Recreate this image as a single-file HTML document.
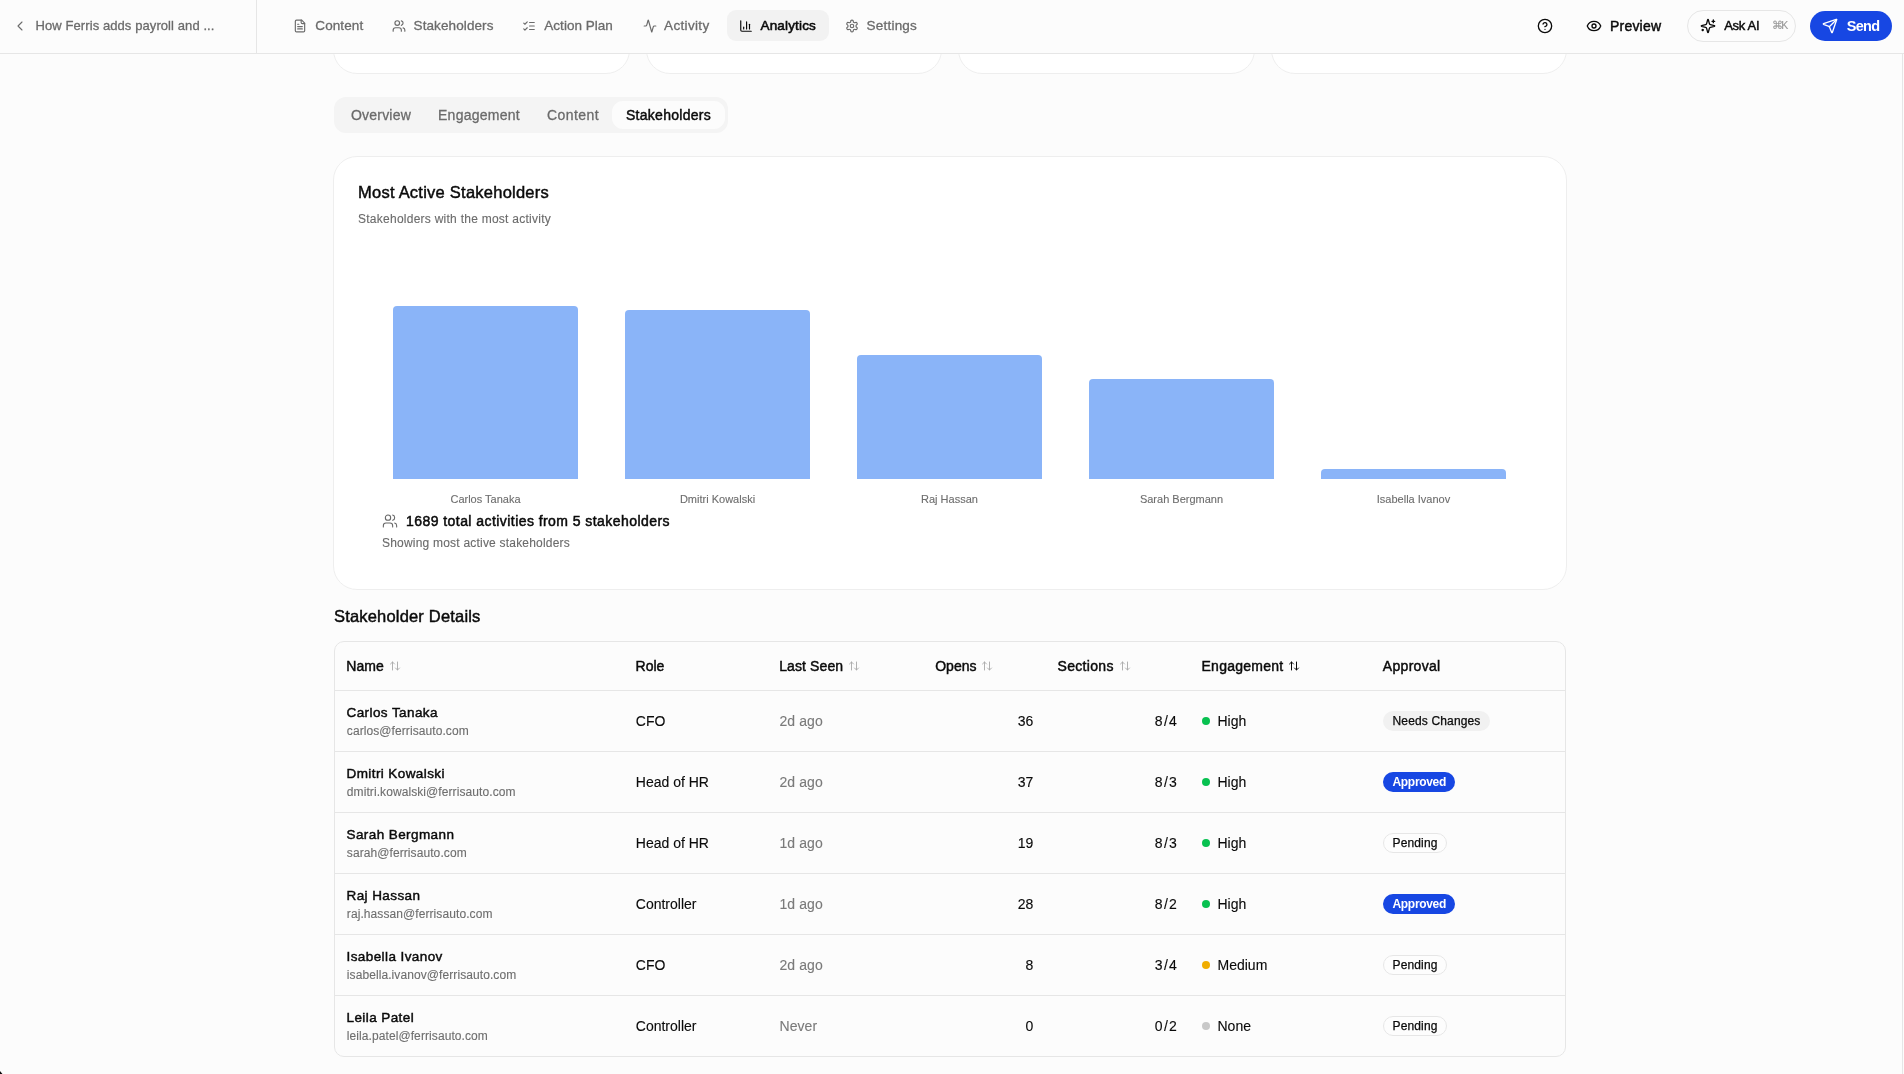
<!DOCTYPE html>
<html><head><meta charset="utf-8"><title>Analytics</title>
<style>
html,body{margin:0;padding:0}
body{width:1904px;height:1074px;overflow:hidden;position:relative;background:#fcfcfc;font-family:"Liberation Sans",sans-serif;-webkit-font-smoothing:antialiased}
#root{position:absolute;left:0;top:0;width:1904px;height:1074px;will-change:transform}
.t{position:absolute;white-space:nowrap}
.r{position:absolute}
.i{position:absolute;overflow:visible}
</style></head><body><div id="root">
<div class="r" style="left:333.0px;top:-40px;width:296.5px;height:114px;background:#fff;border:1px solid #eeeeee;border-radius:24px;box-sizing:border-box"></div>
<div class="r" style="left:645.5px;top:-40px;width:296.5px;height:114px;background:#fff;border:1px solid #eeeeee;border-radius:24px;box-sizing:border-box"></div>
<div class="r" style="left:958.0px;top:-40px;width:296.5px;height:114px;background:#fff;border:1px solid #eeeeee;border-radius:24px;box-sizing:border-box"></div>
<div class="r" style="left:1270.5px;top:-40px;width:296.5px;height:114px;background:#fff;border:1px solid #eeeeee;border-radius:24px;box-sizing:border-box"></div>
<div class="r" style="left:0px;top:0px;width:1904px;height:53px;background:#fcfcfc"></div>
<div class="r" style="left:0px;top:53px;width:1904px;height:1px;background:#e6e6e6"></div>
<div class="r" style="left:256px;top:0px;width:1px;height:53px;background:#e6e6e6"></div>
<div class="r" style="left:1902px;top:54px;width:1px;height:1020px;background:#e6e6e6"></div>
<svg class="i" style="left:12px;top:18px;" width="16" height="16" viewBox="0 0 24 24" fill="none" stroke="#6b6b6b" stroke-width="1.6" stroke-linecap="round" stroke-linejoin="round"><path d="m15 18-6-6 6-6"/></svg>
<div class="t" style="left:35.50px;top:18.99px;font-size:13px;line-height:13px;color:#6b6b6b;letter-spacing:0.088px;-webkit-text-stroke:0.3px #6b6b6b;">How Ferris adds payroll and ...</div>
<div class="r" style="left:727px;top:10px;width:102px;height:31px;background:#f2f2f2;border-radius:9px"></div>
<svg class="i" style="left:293px;top:19px;" width="14" height="14" viewBox="0 0 24 24" fill="none" stroke="#6b6b6b" stroke-width="2" stroke-linecap="round" stroke-linejoin="round"><path d="M15 2H6a2 2 0 0 0-2 2v16a2 2 0 0 0 2 2h12a2 2 0 0 0 2-2V7Z"/><path d="M14 2v4a2 2 0 0 0 2 2h4"/><path d="M10 9H8"/><path d="M16 13H8"/><path d="M16 17H8"/></svg>
<div class="t" style="left:315.30px;top:18.57px;font-size:13.5px;line-height:13.5px;color:#6b6b6b;letter-spacing:0.103px;-webkit-text-stroke:0.3px #6b6b6b;">Content</div>
<svg class="i" style="left:391.5px;top:19px;" width="14" height="14" viewBox="0 0 24 24" fill="none" stroke="#6b6b6b" stroke-width="2" stroke-linecap="round" stroke-linejoin="round"><path d="M16 21v-2a4 4 0 0 0-4-4H6a4 4 0 0 0-4 4v2"/><circle cx="9" cy="7" r="4"/><path d="M22 21v-2a4 4 0 0 0-3-3.87"/><path d="M16 3.13a4 4 0 0 1 0 7.75"/></svg>
<div class="t" style="left:413.55px;top:18.57px;font-size:13.5px;line-height:13.5px;color:#6b6b6b;letter-spacing:0.101px;-webkit-text-stroke:0.3px #6b6b6b;">Stakeholders</div>
<svg class="i" style="left:522px;top:19px;" width="14" height="14" viewBox="0 0 24 24" fill="none" stroke="#6b6b6b" stroke-width="2" stroke-linecap="round" stroke-linejoin="round"><path d="m3 17 2 2 4-4"/><path d="m3 7 2 2 4-4"/><path d="M13 6h8"/><path d="M13 12h8"/><path d="M13 18h8"/></svg>
<div class="t" style="left:544.30px;top:18.57px;font-size:13.5px;line-height:13.5px;color:#6b6b6b;letter-spacing:0.028px;-webkit-text-stroke:0.3px #6b6b6b;">Action Plan</div>
<svg class="i" style="left:642.5px;top:19px;" width="14" height="14" viewBox="0 0 24 24" fill="none" stroke="#6b6b6b" stroke-width="2" stroke-linecap="round" stroke-linejoin="round"><path d="M22 12h-2.48a2 2 0 0 0-1.93 1.46l-2.35 8.36a.25.25 0 0 1-.48 0L9.24 2.18a.25.25 0 0 0-.48 0l-2.35 8.36A2 2 0 0 1 4.49 12H2"/></svg>
<div class="t" style="left:664.05px;top:18.57px;font-size:13.5px;line-height:13.5px;color:#6b6b6b;letter-spacing:0.343px;-webkit-text-stroke:0.3px #6b6b6b;">Activity</div>
<svg class="i" style="left:739px;top:19px;" width="14" height="14" viewBox="0 0 24 24" fill="none" stroke="#0a0a0a" stroke-width="2" stroke-linecap="round" stroke-linejoin="round"><path d="M3 3v16a2 2 0 0 0 2 2h16"/><path d="M18 17V9"/><path d="M13 17V5"/><path d="M8 17v-3"/></svg>
<div class="t" style="left:760.50px;top:18.57px;font-size:13.5px;line-height:13.5px;color:#0a0a0a;letter-spacing:0.165px;-webkit-text-stroke:0.55px #0a0a0a;">Analytics</div>
<svg class="i" style="left:845px;top:19px;" width="14" height="14" viewBox="0 0 24 24" fill="none" stroke="#6b6b6b" stroke-width="2" stroke-linecap="round" stroke-linejoin="round"><path d="M12.22 2h-.44a2 2 0 0 0-2 2v.18a2 2 0 0 1-1 1.73l-.43.25a2 2 0 0 1-2 0l-.15-.08a2 2 0 0 0-2.73.73l-.22.38a2 2 0 0 0 .73 2.73l.15.1a2 2 0 0 1 1 1.72v.51a2 2 0 0 1-1 1.74l-.15.09a2 2 0 0 0-.73 2.73l.22.38a2 2 0 0 0 2.73.73l.15-.08a2 2 0 0 1 2 0l.43.25a2 2 0 0 1 1 1.73V20a2 2 0 0 0 2 2h.44a2 2 0 0 0 2-2v-.18a2 2 0 0 1 1-1.73l.43-.25a2 2 0 0 1 2 0l.15.08a2 2 0 0 0 2.73-.73l.22-.39a2 2 0 0 0-.73-2.73l-.15-.08a2 2 0 0 1-1-1.74v-.5a2 2 0 0 1 1-1.74l.15-.09a2 2 0 0 0 .73-2.73l-.22-.38a2 2 0 0 0-2.73-.73l-.15.08a2 2 0 0 1-2 0l-.43-.25a2 2 0 0 1-1-1.73V4a2 2 0 0 0-2-2z"/><circle cx="12" cy="12" r="3"/></svg>
<div class="t" style="left:866.55px;top:18.57px;font-size:13.5px;line-height:13.5px;color:#6b6b6b;letter-spacing:0.215px;-webkit-text-stroke:0.3px #6b6b6b;">Settings</div>
<svg class="i" style="left:1537px;top:18px;" width="16" height="16" viewBox="0 0 24 24" fill="none" stroke="#0a0a0a" stroke-width="2" stroke-linecap="round" stroke-linejoin="round"><circle cx="12" cy="12" r="10"/><path d="M9.09 9a3 3 0 0 1 5.83 1c0 2-3 3-3 3"/><path d="M12 17h.01"/></svg>
<svg class="i" style="left:1586px;top:18px;" width="16" height="16" viewBox="0 0 24 24" fill="none" stroke="#0a0a0a" stroke-width="2" stroke-linecap="round" stroke-linejoin="round"><path d="M2.062 12.348a1 1 0 0 1 0-.696 10.75 10.75 0 0 1 19.876 0 1 1 0 0 1 0 .696 10.75 10.75 0 0 1-19.876 0"/><circle cx="12" cy="12" r="3"/></svg>
<div class="t" style="left:1610.00px;top:19.40px;font-size:14px;line-height:14px;color:#0a0a0a;letter-spacing:0.208px;-webkit-text-stroke:0.45px #0a0a0a;">Preview</div>
<div class="r" style="left:1687px;top:10px;width:107px;height:30px;border:1px solid #e6e6e6;border-radius:16px;background:#fcfcfc"></div>
<svg class="i" style="left:1700px;top:18px;" width="16" height="16" viewBox="0 0 24 24" fill="none" stroke="#0a0a0a" stroke-width="2" stroke-linecap="round" stroke-linejoin="round"><path d="M9.937 15.5A2 2 0 0 0 8.5 14.063l-6.135-1.582a.5.5 0 0 1 0-.962L8.5 9.936A2 2 0 0 0 9.937 8.5l1.582-6.135a.5.5 0 0 1 .963 0L14.063 8.5A2 2 0 0 0 15.5 9.937l6.135 1.581a.5.5 0 0 1 0 .964L15.5 14.063a2 2 0 0 0-1.437 1.437l-1.582 6.135a.5.5 0 0 1-.963 0z"/><path d="M20 3v4"/><path d="M22 5h-4"/><path d="M4 17v2"/><path d="M5 18H3"/></svg>
<div class="t" style="left:1724.25px;top:19.49px;font-size:13px;line-height:13px;color:#0a0a0a;letter-spacing:-0.308px;-webkit-text-stroke:0.45px #0a0a0a;">Ask AI</div>
<div class="t" style="left:1771.50px;top:20.31px;font-size:10.5px;line-height:10.5px;color:#9a9a9a;letter-spacing:-1.189px;-webkit-text-stroke:0.12px #9a9a9a;">⌘K</div>
<div class="r" style="left:1810px;top:11px;width:82px;height:30px;background:#1747e3;border-radius:15px"></div>
<svg class="i" style="left:1822px;top:18px;" width="16" height="16" viewBox="0 0 24 24" fill="none" stroke="#fff" stroke-width="2" stroke-linecap="round" stroke-linejoin="round"><path d="M14.536 21.686a.5.5 0 0 0 .937-.024l6.5-19a.496.496 0 0 0-.635-.635l-19 6.5a.5.5 0 0 0-.024.937l7.93 3.18a2 2 0 0 1 1.112 1.11z"/><path d="m21.854 2.147-10.94 10.939"/></svg>
<div class="t" style="left:1846.75px;top:18.97px;font-size:14.5px;line-height:14.5px;color:#fff;font-weight:700;letter-spacing:-0.737px;">Send</div>
<div class="r" style="left:334px;top:97px;width:394px;height:36px;background:#f4f4f4;border-radius:12px"></div>
<div class="r" style="left:612px;top:101px;width:113px;height:28px;background:#fcfcfc;border-radius:11px"></div>
<div class="t" style="left:351.00px;top:107.95px;font-size:14px;line-height:14px;color:#6b6b6b;letter-spacing:0.207px;-webkit-text-stroke:0.3px #6b6b6b;">Overview</div>
<div class="t" style="left:438.00px;top:107.95px;font-size:14px;line-height:14px;color:#6b6b6b;letter-spacing:0.261px;-webkit-text-stroke:0.3px #6b6b6b;">Engagement</div>
<div class="t" style="left:547.00px;top:107.95px;font-size:14px;line-height:14px;color:#6b6b6b;letter-spacing:0.424px;-webkit-text-stroke:0.3px #6b6b6b;">Content</div>
<div class="t" style="left:626.00px;top:107.95px;font-size:14px;line-height:14px;color:#0a0a0a;letter-spacing:0.274px;-webkit-text-stroke:0.45px #0a0a0a;">Stakeholders</div>
<div class="r" style="left:333px;top:156px;width:1234px;height:434px;background:#fff;border:1px solid #eeeeee;border-radius:24px;box-sizing:border-box"></div>
<div class="t" style="left:358.00px;top:183.93px;font-size:16.5px;line-height:16.5px;color:#0a0a0a;letter-spacing:0.240px;-webkit-text-stroke:0.45px #0a0a0a;">Most Active Stakeholders</div>
<div class="t" style="left:358.00px;top:212.54px;font-size:12px;line-height:12px;color:#6b6b6b;letter-spacing:0.255px;-webkit-text-stroke:0.12px #6b6b6b;">Stakeholders with the most activity</div>
<div class="r" style="left:393px;top:306.4px;width:185px;height:172.6px;background:#8ab4f8;border-radius:4px 4px 0 0"></div>
<div class="t" style="left:450.45px;top:493.59px;font-size:11px;line-height:11px;color:#6e6e6e;-webkit-text-stroke:0.12px #6e6e6e;">Carlos Tanaka</div>
<div class="r" style="left:625px;top:310.2px;width:185px;height:168.8px;background:#8ab4f8;border-radius:4px 4px 0 0"></div>
<div class="t" style="left:679.91px;top:493.59px;font-size:11px;line-height:11px;color:#6e6e6e;-webkit-text-stroke:0.12px #6e6e6e;">Dmitri Kowalski</div>
<div class="r" style="left:857px;top:355.3px;width:185px;height:123.7px;background:#8ab4f8;border-radius:4px 4px 0 0"></div>
<div class="t" style="left:921.07px;top:493.59px;font-size:11px;line-height:11px;color:#6e6e6e;-webkit-text-stroke:0.12px #6e6e6e;">Raj Hassan</div>
<div class="r" style="left:1089px;top:378.6px;width:185px;height:100.4px;background:#8ab4f8;border-radius:4px 4px 0 0"></div>
<div class="t" style="left:1139.92px;top:493.59px;font-size:11px;line-height:11px;color:#6e6e6e;-webkit-text-stroke:0.12px #6e6e6e;">Sarah Bergmann</div>
<div class="r" style="left:1321px;top:469.2px;width:185px;height:9.8px;background:#8ab4f8;border-radius:4px 4px 0 0"></div>
<div class="t" style="left:1376.81px;top:493.59px;font-size:11px;line-height:11px;color:#6e6e6e;-webkit-text-stroke:0.12px #6e6e6e;">Isabella Ivanov</div>
<svg class="i" style="left:382px;top:513px;" width="16" height="16" viewBox="0 0 24 24" fill="none" stroke="#666" stroke-width="1.6" stroke-linecap="round" stroke-linejoin="round"><path d="M16 21v-2a4 4 0 0 0-4-4H6a4 4 0 0 0-4 4v2"/><circle cx="9" cy="7" r="4"/><path d="M22 21v-2a4 4 0 0 0-3-3.87"/><path d="M16 3.13a4 4 0 0 1 0 7.75"/></svg>
<div class="t" style="left:406.00px;top:514.05px;font-size:14px;line-height:14px;color:#0a0a0a;letter-spacing:0.442px;-webkit-text-stroke:0.5px #0a0a0a;">1689 total activities from 5 stakeholders</div>
<div class="t" style="left:382.00px;top:536.74px;font-size:12px;line-height:12px;color:#6b6b6b;letter-spacing:0.206px;-webkit-text-stroke:0.12px #6b6b6b;">Showing most active stakeholders</div>
<div class="t" style="left:334.00px;top:608.13px;font-size:16.5px;line-height:16.5px;color:#0a0a0a;letter-spacing:0.181px;-webkit-text-stroke:0.45px #0a0a0a;">Stakeholder Details</div>
<div class="r" style="left:334px;top:641px;width:1232px;height:416px;border:1px solid #e6e6e6;border-radius:10px;box-sizing:border-box;background:transparent"></div>
<div class="t" style="left:346.20px;top:659.15px;font-size:14px;line-height:14px;color:#0a0a0a;letter-spacing:0.089px;-webkit-text-stroke:0.45px #0a0a0a;">Name</div>
<svg class="i" style="left:388.7px;top:660px;" width="12" height="12" viewBox="0 0 24 24" fill="none" stroke="#a8a8a8" stroke-width="1.8" stroke-linecap="round" stroke-linejoin="round"><path d="m21 16-4 4-4-4"/><path d="M17 20V4"/><path d="m3 8 4-4 4 4"/><path d="M7 4v16"/></svg>
<div class="t" style="left:635.60px;top:659.15px;font-size:14px;line-height:14px;color:#0a0a0a;letter-spacing:-0.048px;-webkit-text-stroke:0.45px #0a0a0a;">Role</div>
<div class="t" style="left:779.20px;top:659.15px;font-size:14px;line-height:14px;color:#0a0a0a;letter-spacing:0.106px;-webkit-text-stroke:0.45px #0a0a0a;">Last Seen</div>
<svg class="i" style="left:848px;top:660px;" width="12" height="12" viewBox="0 0 24 24" fill="none" stroke="#a8a8a8" stroke-width="1.8" stroke-linecap="round" stroke-linejoin="round"><path d="m21 16-4 4-4-4"/><path d="M17 20V4"/><path d="m3 8 4-4 4 4"/><path d="M7 4v16"/></svg>
<div class="t" style="left:935.20px;top:659.15px;font-size:14px;line-height:14px;color:#0a0a0a;letter-spacing:0.031px;-webkit-text-stroke:0.45px #0a0a0a;">Opens</div>
<svg class="i" style="left:981.4px;top:660px;" width="12" height="12" viewBox="0 0 24 24" fill="none" stroke="#a8a8a8" stroke-width="1.8" stroke-linecap="round" stroke-linejoin="round"><path d="m21 16-4 4-4-4"/><path d="M17 20V4"/><path d="m3 8 4-4 4 4"/><path d="M7 4v16"/></svg>
<div class="t" style="left:1057.50px;top:659.15px;font-size:14px;line-height:14px;color:#0a0a0a;letter-spacing:0.326px;-webkit-text-stroke:0.45px #0a0a0a;">Sections</div>
<svg class="i" style="left:1118.6px;top:660px;" width="12" height="12" viewBox="0 0 24 24" fill="none" stroke="#a8a8a8" stroke-width="1.8" stroke-linecap="round" stroke-linejoin="round"><path d="m21 16-4 4-4-4"/><path d="M17 20V4"/><path d="m3 8 4-4 4 4"/><path d="M7 4v16"/></svg>
<div class="t" style="left:1201.50px;top:659.15px;font-size:14px;line-height:14px;color:#0a0a0a;letter-spacing:0.261px;-webkit-text-stroke:0.45px #0a0a0a;">Engagement</div>
<svg class="i" style="left:1288.3px;top:660px;" width="12" height="12" viewBox="0 0 24 24" fill="none" stroke="#0a0a0a" stroke-width="2" stroke-linecap="round" stroke-linejoin="round"><path d="m21 16-4 4-4-4"/><path d="M17 20V4"/><path d="m3 8 4-4 4 4"/><path d="M7 4v16"/></svg>
<div class="t" style="left:1382.80px;top:659.15px;font-size:14px;line-height:14px;color:#0a0a0a;letter-spacing:0.306px;-webkit-text-stroke:0.45px #0a0a0a;">Approval</div>
<div class="r" style="left:335px;top:690px;width:1230px;height:1px;background:#e6e6e6"></div>
<div class="r" style="left:335px;top:751px;width:1230px;height:1px;background:#e6e6e6"></div>
<div class="r" style="left:335px;top:812px;width:1230px;height:1px;background:#e6e6e6"></div>
<div class="r" style="left:335px;top:873px;width:1230px;height:1px;background:#e6e6e6"></div>
<div class="r" style="left:335px;top:934px;width:1230px;height:1px;background:#e6e6e6"></div>
<div class="r" style="left:335px;top:995px;width:1230px;height:1px;background:#e6e6e6"></div>
<div class="t" style="left:346.50px;top:706.17px;font-size:13.5px;line-height:13.5px;color:#0a0a0a;letter-spacing:0.412px;-webkit-text-stroke:0.45px #0a0a0a;">Carlos Tanaka</div>
<div class="t" style="left:346.80px;top:724.74px;font-size:12px;line-height:12px;color:#6e6e6e;letter-spacing:0.085px;-webkit-text-stroke:0.12px #6e6e6e;">carlos@ferrisauto.com</div>
<div class="t" style="left:635.80px;top:713.75px;font-size:14px;line-height:14px;color:#0a0a0a;-webkit-text-stroke:0.12px #0a0a0a;">CFO</div>
<div class="t" style="left:779.50px;top:713.75px;font-size:14px;line-height:14px;color:#7a7a7a;letter-spacing:0.070px;-webkit-text-stroke:0.12px #7a7a7a;">2d ago</div>
<div class="t" style="right:870.80px;top:713.75px;font-size:14px;line-height:14px;color:#0a0a0a;-webkit-text-stroke:0.12px #0a0a0a;text-align:right;">36</div>
<div class="t" style="right:725.80px;top:713.75px;font-size:14px;line-height:14px;color:#0a0a0a;letter-spacing:1.300px;-webkit-text-stroke:0.12px #0a0a0a;text-align:right;">8/4</div>
<div class="r" style="left:1202px;top:717px;width:8px;height:8px;border-radius:50%;background:#08c150"></div>
<div class="t" style="left:1217.50px;top:713.75px;font-size:14px;line-height:14px;color:#0a0a0a;-webkit-text-stroke:0.12px #0a0a0a;">High</div>
<div class="r" style="left:1383px;top:711px;width:107px;height:20px;background:#f1f1f1;border-radius:10px"></div>
<div class="t" style="left:1392.50px;top:714.74px;font-size:12px;line-height:12px;color:#0a0a0a;letter-spacing:0.150px;-webkit-text-stroke:0.25px #0a0a0a;">Needs Changes</div>
<div class="t" style="left:346.50px;top:767.17px;font-size:13.5px;line-height:13.5px;color:#0a0a0a;letter-spacing:0.412px;-webkit-text-stroke:0.45px #0a0a0a;">Dmitri Kowalski</div>
<div class="t" style="left:346.80px;top:785.74px;font-size:12px;line-height:12px;color:#6e6e6e;letter-spacing:0.085px;-webkit-text-stroke:0.12px #6e6e6e;">dmitri.kowalski@ferrisauto.com</div>
<div class="t" style="left:635.80px;top:774.75px;font-size:14px;line-height:14px;color:#0a0a0a;-webkit-text-stroke:0.12px #0a0a0a;">Head of HR</div>
<div class="t" style="left:779.50px;top:774.75px;font-size:14px;line-height:14px;color:#7a7a7a;letter-spacing:0.070px;-webkit-text-stroke:0.12px #7a7a7a;">2d ago</div>
<div class="t" style="right:870.80px;top:774.75px;font-size:14px;line-height:14px;color:#0a0a0a;-webkit-text-stroke:0.12px #0a0a0a;text-align:right;">37</div>
<div class="t" style="right:725.80px;top:774.75px;font-size:14px;line-height:14px;color:#0a0a0a;letter-spacing:1.300px;-webkit-text-stroke:0.12px #0a0a0a;text-align:right;">8/3</div>
<div class="r" style="left:1202px;top:778px;width:8px;height:8px;border-radius:50%;background:#08c150"></div>
<div class="t" style="left:1217.50px;top:774.75px;font-size:14px;line-height:14px;color:#0a0a0a;-webkit-text-stroke:0.12px #0a0a0a;">High</div>
<div class="r" style="left:1383px;top:772px;width:72px;height:20px;background:#1747e3;border-radius:10px"></div>
<div class="t" style="left:1392.50px;top:775.74px;font-size:12px;line-height:12px;color:#fff;font-weight:700;letter-spacing:-0.313px;">Approved</div>
<div class="t" style="left:346.50px;top:828.17px;font-size:13.5px;line-height:13.5px;color:#0a0a0a;letter-spacing:0.412px;-webkit-text-stroke:0.45px #0a0a0a;">Sarah Bergmann</div>
<div class="t" style="left:346.80px;top:846.74px;font-size:12px;line-height:12px;color:#6e6e6e;letter-spacing:0.085px;-webkit-text-stroke:0.12px #6e6e6e;">sarah@ferrisauto.com</div>
<div class="t" style="left:635.80px;top:835.75px;font-size:14px;line-height:14px;color:#0a0a0a;-webkit-text-stroke:0.12px #0a0a0a;">Head of HR</div>
<div class="t" style="left:779.50px;top:835.75px;font-size:14px;line-height:14px;color:#7a7a7a;letter-spacing:0.070px;-webkit-text-stroke:0.12px #7a7a7a;">1d ago</div>
<div class="t" style="right:870.80px;top:835.75px;font-size:14px;line-height:14px;color:#0a0a0a;-webkit-text-stroke:0.12px #0a0a0a;text-align:right;">19</div>
<div class="t" style="right:725.80px;top:835.75px;font-size:14px;line-height:14px;color:#0a0a0a;letter-spacing:1.300px;-webkit-text-stroke:0.12px #0a0a0a;text-align:right;">8/3</div>
<div class="r" style="left:1202px;top:839px;width:8px;height:8px;border-radius:50%;background:#08c150"></div>
<div class="t" style="left:1217.50px;top:835.75px;font-size:14px;line-height:14px;color:#0a0a0a;-webkit-text-stroke:0.12px #0a0a0a;">High</div>
<div class="r" style="left:1383px;top:833px;width:64px;height:20px;background:#fdfdfd;border:1px solid #e6e6e6;border-radius:10px;box-sizing:border-box"></div>
<div class="t" style="left:1392.50px;top:836.74px;font-size:12px;line-height:12px;color:#0a0a0a;letter-spacing:0.138px;-webkit-text-stroke:0.25px #0a0a0a;">Pending</div>
<div class="t" style="left:346.50px;top:889.17px;font-size:13.5px;line-height:13.5px;color:#0a0a0a;letter-spacing:0.412px;-webkit-text-stroke:0.45px #0a0a0a;">Raj Hassan</div>
<div class="t" style="left:346.80px;top:907.74px;font-size:12px;line-height:12px;color:#6e6e6e;letter-spacing:0.085px;-webkit-text-stroke:0.12px #6e6e6e;">raj.hassan@ferrisauto.com</div>
<div class="t" style="left:635.80px;top:896.75px;font-size:14px;line-height:14px;color:#0a0a0a;-webkit-text-stroke:0.12px #0a0a0a;">Controller</div>
<div class="t" style="left:779.50px;top:896.75px;font-size:14px;line-height:14px;color:#7a7a7a;letter-spacing:0.070px;-webkit-text-stroke:0.12px #7a7a7a;">1d ago</div>
<div class="t" style="right:870.80px;top:896.75px;font-size:14px;line-height:14px;color:#0a0a0a;-webkit-text-stroke:0.12px #0a0a0a;text-align:right;">28</div>
<div class="t" style="right:725.80px;top:896.75px;font-size:14px;line-height:14px;color:#0a0a0a;letter-spacing:1.300px;-webkit-text-stroke:0.12px #0a0a0a;text-align:right;">8/2</div>
<div class="r" style="left:1202px;top:900px;width:8px;height:8px;border-radius:50%;background:#08c150"></div>
<div class="t" style="left:1217.50px;top:896.75px;font-size:14px;line-height:14px;color:#0a0a0a;-webkit-text-stroke:0.12px #0a0a0a;">High</div>
<div class="r" style="left:1383px;top:894px;width:72px;height:20px;background:#1747e3;border-radius:10px"></div>
<div class="t" style="left:1392.50px;top:897.74px;font-size:12px;line-height:12px;color:#fff;font-weight:700;letter-spacing:-0.313px;">Approved</div>
<div class="t" style="left:346.50px;top:950.17px;font-size:13.5px;line-height:13.5px;color:#0a0a0a;letter-spacing:0.412px;-webkit-text-stroke:0.45px #0a0a0a;">Isabella Ivanov</div>
<div class="t" style="left:346.80px;top:968.74px;font-size:12px;line-height:12px;color:#6e6e6e;letter-spacing:0.085px;-webkit-text-stroke:0.12px #6e6e6e;">isabella.ivanov@ferrisauto.com</div>
<div class="t" style="left:635.80px;top:957.75px;font-size:14px;line-height:14px;color:#0a0a0a;-webkit-text-stroke:0.12px #0a0a0a;">CFO</div>
<div class="t" style="left:779.50px;top:957.75px;font-size:14px;line-height:14px;color:#7a7a7a;letter-spacing:0.070px;-webkit-text-stroke:0.12px #7a7a7a;">2d ago</div>
<div class="t" style="right:870.80px;top:957.75px;font-size:14px;line-height:14px;color:#0a0a0a;-webkit-text-stroke:0.12px #0a0a0a;text-align:right;">8</div>
<div class="t" style="right:725.80px;top:957.75px;font-size:14px;line-height:14px;color:#0a0a0a;letter-spacing:1.300px;-webkit-text-stroke:0.12px #0a0a0a;text-align:right;">3/4</div>
<div class="r" style="left:1202px;top:961px;width:8px;height:8px;border-radius:50%;background:#f0ad00"></div>
<div class="t" style="left:1217.50px;top:957.75px;font-size:14px;line-height:14px;color:#0a0a0a;-webkit-text-stroke:0.12px #0a0a0a;">Medium</div>
<div class="r" style="left:1383px;top:955px;width:64px;height:20px;background:#fdfdfd;border:1px solid #e6e6e6;border-radius:10px;box-sizing:border-box"></div>
<div class="t" style="left:1392.50px;top:958.74px;font-size:12px;line-height:12px;color:#0a0a0a;letter-spacing:0.138px;-webkit-text-stroke:0.25px #0a0a0a;">Pending</div>
<div class="t" style="left:346.50px;top:1011.17px;font-size:13.5px;line-height:13.5px;color:#0a0a0a;letter-spacing:0.412px;-webkit-text-stroke:0.45px #0a0a0a;">Leila Patel</div>
<div class="t" style="left:346.80px;top:1029.74px;font-size:12px;line-height:12px;color:#6e6e6e;letter-spacing:0.085px;-webkit-text-stroke:0.12px #6e6e6e;">leila.patel@ferrisauto.com</div>
<div class="t" style="left:635.80px;top:1018.75px;font-size:14px;line-height:14px;color:#0a0a0a;-webkit-text-stroke:0.12px #0a0a0a;">Controller</div>
<div class="t" style="left:779.50px;top:1018.75px;font-size:14px;line-height:14px;color:#7a7a7a;letter-spacing:0.070px;-webkit-text-stroke:0.12px #7a7a7a;">Never</div>
<div class="t" style="right:870.80px;top:1018.75px;font-size:14px;line-height:14px;color:#0a0a0a;-webkit-text-stroke:0.12px #0a0a0a;text-align:right;">0</div>
<div class="t" style="right:725.80px;top:1018.75px;font-size:14px;line-height:14px;color:#0a0a0a;letter-spacing:1.300px;-webkit-text-stroke:0.12px #0a0a0a;text-align:right;">0/2</div>
<div class="r" style="left:1202px;top:1022px;width:8px;height:8px;border-radius:50%;background:#c8c8c8"></div>
<div class="t" style="left:1217.50px;top:1018.75px;font-size:14px;line-height:14px;color:#0a0a0a;-webkit-text-stroke:0.12px #0a0a0a;">None</div>
<div class="r" style="left:1383px;top:1016px;width:64px;height:20px;background:#fdfdfd;border:1px solid #e6e6e6;border-radius:10px;box-sizing:border-box"></div>
<div class="t" style="left:1392.50px;top:1019.74px;font-size:12px;line-height:12px;color:#0a0a0a;letter-spacing:0.138px;-webkit-text-stroke:0.25px #0a0a0a;">Pending</div>
<div class="r" style="left:-44px;top:1064px;width:52px;height:52px;border-radius:50%;background:#0a0a0a"></div>
</div></body></html>
